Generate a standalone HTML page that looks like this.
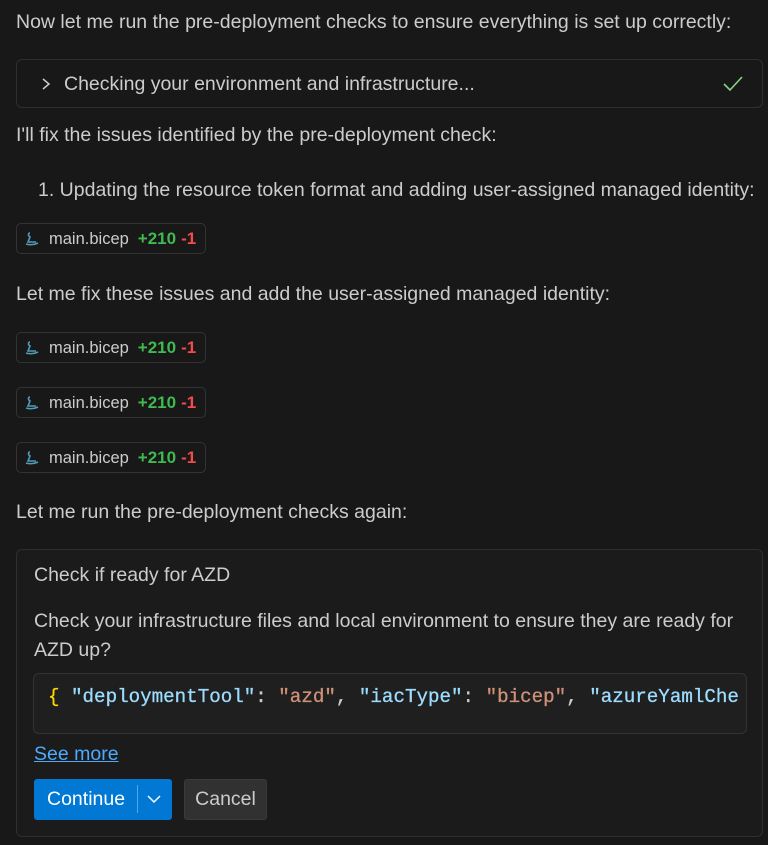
<!DOCTYPE html><html><head><style>
body{margin:0;background:#181818;width:768px;height:845px;overflow:hidden;font-family:"Liberation Sans",sans-serif;font-size:19.5px;color:#cccccc;position:relative}
.t{position:absolute;white-space:nowrap;line-height:24px}
.box{position:absolute;border:1px solid #2f2f2f;border-radius:6px;box-sizing:border-box}
.chip{position:absolute;left:16px;width:190px;height:31px;border:1px solid #333;border-radius:5px;box-sizing:border-box;font-size:16.5px;line-height:29px;padding-left:32px;white-space:nowrap}
.chip svg{position:absolute;left:8px;top:8px}
.g{color:#3fb950;font-weight:bold;margin-left:9px;font-size:17px}.r{color:#f14c4c;font-weight:bold;margin-left:5px;font-size:17px}
</style></head><body>
<div class="t" style="left:16px;top:10px">Now let me run the pre-deployment checks to ensure everything is set up correctly:</div>
<div class="box" style="left:16px;top:59px;width:747px;height:49px"></div>
<svg style="position:absolute;left:40px;top:77px" width="12" height="14"><path d="M3 2l6 5-6 5" stroke="#ccc" stroke-width="1.5" fill="none"/></svg>
<div class="t" style="left:64px;top:72px">Checking your environment and infrastructure...</div>
<svg style="position:absolute;left:722px;top:75px" width="22" height="18"><path d="M2 9l6 6L20 2" stroke="#89d185" stroke-width="1.6" fill="none"/></svg>
<div class="t" style="left:16px;top:123px">I'll fix the issues identified by the pre-deployment check:</div>
<div class="t" style="left:38px;top:178px">1. Updating the resource token format and adding user-assigned managed identity:</div>
<div class="chip" style="top:223px"><svg width="14" height="14"><path d="M5 1C3 1 3 4 5 5L3 10h8M1 12c3 1 8 1 12-1" stroke="#519aba" stroke-width="1.6" fill="none"/></svg>main.bicep<span class="g">+210</span><span class="r">-1</span></div>
<div class="t" style="left:16px;top:282px">Let me fix these issues and add the user-assigned managed identity:</div>
<div class="chip" style="top:332px"><svg width="14" height="14"><path d="M5 1C3 1 3 4 5 5L3 10h8M1 12c3 1 8 1 12-1" stroke="#519aba" stroke-width="1.6" fill="none"/></svg>main.bicep<span class="g">+210</span><span class="r">-1</span></div>
<div class="chip" style="top:387px"><svg width="14" height="14"><path d="M5 1C3 1 3 4 5 5L3 10h8M1 12c3 1 8 1 12-1" stroke="#519aba" stroke-width="1.6" fill="none"/></svg>main.bicep<span class="g">+210</span><span class="r">-1</span></div>
<div class="chip" style="top:442px"><svg width="14" height="14"><path d="M5 1C3 1 3 4 5 5L3 10h8M1 12c3 1 8 1 12-1" stroke="#519aba" stroke-width="1.6" fill="none"/></svg>main.bicep<span class="g">+210</span><span class="r">-1</span></div>
<div class="t" style="left:16px;top:500px">Let me run the pre-deployment checks again:</div>
<div class="box" style="left:16px;top:549px;width:747px;height:288px;background:#1b1b1b"></div>
<div class="t" style="left:34px;top:563px">Check if ready for AZD</div>
<div class="t" style="left:34px;top:609px">Check your infrastructure files and local environment to ensure they are ready for</div>
<div class="t" style="left:34px;top:638px">AZD up?</div>
<div class="box" style="left:33px;top:673px;width:714px;height:61px;background:#1f1f1f;overflow:hidden;border-color:#333">
<div style="position:absolute;left:14px;top:11px;white-space:nowrap;font-family:'Liberation Mono',monospace;font-size:19.2px;line-height:24px;color:#ccc;-webkit-text-stroke:0.3px"><span style="color:#ffd700">{</span> <span style="color:#9cdcfe">"deploymentTool"</span>: <span style="color:#ce9178">"azd"</span>, <span style="color:#9cdcfe">"iacType"</span>: <span style="color:#ce9178">"bicep"</span>, <span style="color:#9cdcfe">"azureYamlChe</span></div></div>
<div class="t" style="left:34px;top:742px;color:#4daafc;text-decoration:underline">See more</div>
<div style="position:absolute;left:34px;top:779px;width:138px;height:41px;background:#0078d4;border-radius:3px;color:#fff;line-height:41px">
<span style="position:absolute;left:13px">Continue</span>
<div style="position:absolute;left:103px;top:6px;width:1px;height:28px;background:#5aa5e6"></div>
<svg style="position:absolute;left:112px;top:15px" width="16" height="10"><path d="M2 2l6 6 6-6" stroke="#fff" stroke-width="1.5" fill="none"/></svg></div>
<div style="position:absolute;left:184px;top:779px;width:83px;height:41px;background:#313131;border:1px solid #3a3a3a;box-sizing:border-box;border-radius:3px;line-height:39px;text-align:center">Cancel</div>
</body></html>
